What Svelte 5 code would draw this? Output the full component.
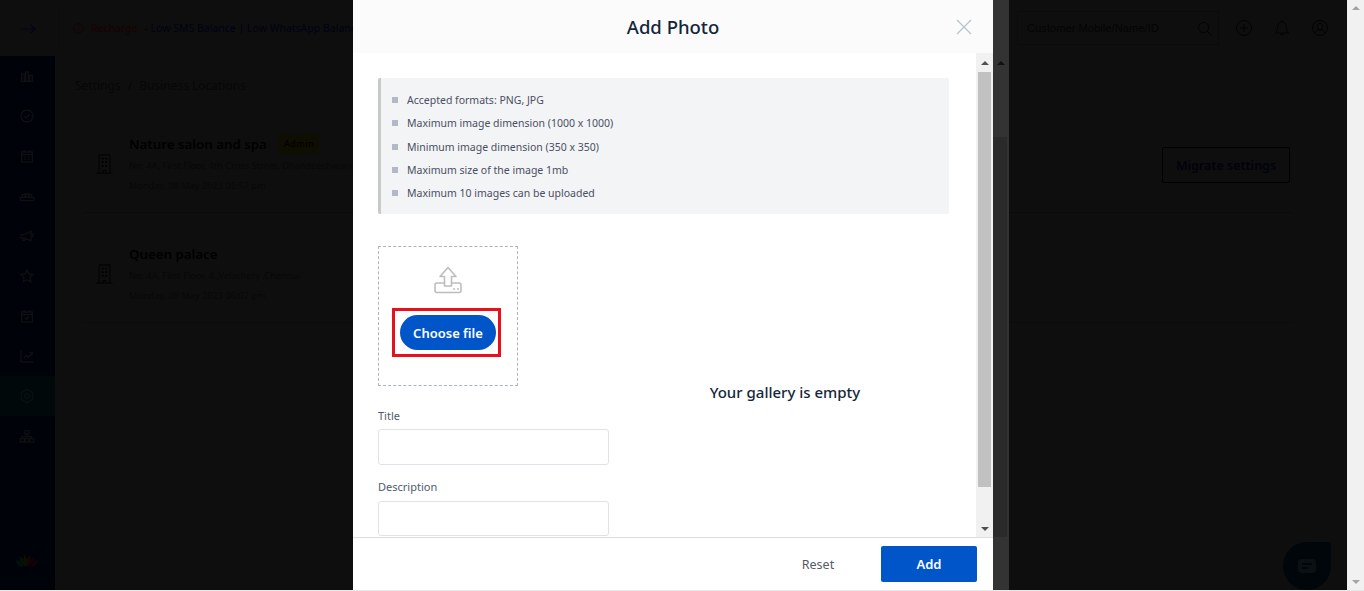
<script lang="ts">
  const rules = [
    "Accepted formats: PNG, JPG",
    "Maximum image dimension (1000 x 1000)",
    "Minimum image dimension (350 x 350)",
    "Maximum size of the image 1mb",
    "Maximum 10 images can be uploaded",
  ];

  const locations = [
    {
      name: "Nature salon and spa",
      admin: true,
      address: "No: 4A, First Floor, 4th Cross Street, Dhandeeshwaram Nagar, Velachery",
      date: "Monday, 08 May 2023 05:57 pm",
    },
    {
      name: "Queen palace",
      admin: false,
      address: "No: 4A, First Floor, 4 ,Velachery ,Chennai",
      date: "Monday, 08 May 2023 06:07 pm",
    },
  ];

  // sidebar icons, drawn on a 24 box
  const navIcons = [
    "M2 20h20M4 19V9h4v10M10 19V6h4v13M16 19v-8h4v8",
    "M12 3a9 9 0 1 0 0 18a9 9 0 1 0 0-18M8 12l3 3l5-6",
    "M4 6h16v15H4zM4 10h16M8 3v4M16 3v4M8 14h2M14 14h2M8 17h2M14 17h2",
    "M2 14h20v5H2zM5 14v-4h5v4M14 14v-4h5v4M9 9h6v5H9z",
    "M3 10v5h5l10 4V5L8 10zM6 15v4h3v-3M18 9h3v4h-3",
    "M12 3l2.800 5.900l6.200.8l-4.500 4.400l1.100 6.400L12 17.500l-5.600 3l1.100-6.400L3 9.700l6.200-.8z",
    "M4 6h16v15H4zM4 10h16M8 3v4M16 3v4M9 15l2 2l4-4",
    "M3 3v18h18M7 15l4-4l3 3l6-6M16 7h4v4",
    "M12 2l8.500 5v10L12 22l-8.500-5V7zM12 8.500a3.500 3.500 0 1 0 0 7a3.500 3.500 0 1 0 0-7",
    "M9 4h6v5H9zM12 9v4M5 16v-3h14v3M2 16h6v5H2zM9 16h6v5H9zM16 16h6v5h-6z",
  ];
</script>

<div class="screen">
  <div class="page">
    <header class="topbar">
      <div class="toggle">
        <svg width="16" height="10" viewBox="0 0 16 10" fill="none" stroke="#01041a" stroke-width="1.200">
          <path d="M0 5h15M11 1l4 4l-4 4" />
        </svg>
      </div>
      <div class="notice">
        <svg width="11" height="11" viewBox="0 0 12 12" fill="none" stroke="#180202">
          <circle cx="6" cy="6" r="5" /><path d="M6 5v4M6 3v1" />
        </svg>
        <span class="recharge">Recharge</span>
        <span class="low">- Low SMS Balance | Low WhatsApp Balance</span>
      </div>
      <div class="top-right">
        <div class="search">
          <span>Customer Mobile/Name/ID</span>
          <svg width="15" height="15" viewBox="0 0 16 16" fill="none" stroke="#030303">
            <circle cx="7" cy="7" r="5.500" /><path d="M11 11l4.500 4.500" />
          </svg>
        </div>
        <svg class="ticon" width="16" height="16" viewBox="0 0 16 16" fill="none" stroke="#030303">
          <circle cx="8" cy="8" r="7.500" /><path d="M8 4v8M4 8h8" />
        </svg>
        <svg class="ticon" width="16" height="16" viewBox="0 0 16 16" fill="none" stroke="#030303">
          <path d="M1.500 13c1.500-1 2-2.500 2-5.500S5.500 2 8 2s4.500 2.500 4.500 5.500s.5 4.500 2 5.500zM6.500 14.500h3M8 0v2" />
        </svg>
        <svg class="ticon" width="16" height="16" viewBox="0 0 16 16" fill="none" stroke="#030303">
          <circle cx="8" cy="8" r="7.500" /><circle cx="8" cy="6.500" r="3" /><path d="M3 13c1-2.500 3-3 5-3s4 .5 5 3" />
        </svg>
      </div>
    </header>

    <div class="below">
      <nav class="sidebar">
        {#each navIcons as d, i}
          <div class="nav-item" class:active={i === 8}>
            <svg width="16" height="16" viewBox="0 0 24 24" fill="none" stroke={i === 8 ? "#0a1012" : "#0e0f10"} stroke-width="2">
              <path {d} />
            </svg>
          </div>
        {/each}
        <div class="lotus">
          <svg width="24" height="13" viewBox="0 0 24 14">
            <path d="M0 7c3-1 6 1 8 7C3 14 1 11 0 7z" fill="#011009" />
            <path d="M4 3c3 0 6 4 7 11C7 12 4 8 4 3z" fill="#031206" />
            <path d="M9 1c2 2 3 4 3 7c0 2 0 4-1 6C8 10 8 5 9 1z" fill="#0e0f02" />
            <path d="M15 1c1 4 1 9-3 13c-1-4-1-9 3-13z" fill="#120802" />
            <path d="M20 3c0 5-3 9-8 11c1-6 4-10 8-11z" fill="#130202" />
            <path d="M24 7c-1 4-3 7-8 7c2-6 5-8 8-7z" fill="#10020b" />
          </svg>
        </div>
      </nav>

      <main class="content">
        <div class="crumbs"><span>Settings</span><span>/</span><span>Business Locations</span></div>
        <div class="content-row">
          <div class="locations">
            {#each locations as loc}
              <div class="location">
                <svg class="building" width="17" height="20" viewBox="0 0 18 22" fill="none" stroke="#000">
                  <path d="M3 21V1h12v20M0 21h18M7.500 21v-3h3v3" />
                  <path d="M6 5h2M10 5h2M6 9h2M10 9h2M6 13h2M10 13h2" stroke-width="2" />
                </svg>
                <div class="loc-text">
                  <div class="loc-name">
                    <span>{loc.name}</span>
                    {#if loc.admin}<span class="badge">Admin</span>{/if}
                  </div>
                  <div class="loc-line">{loc.address}</div>
                  <div class="loc-line">{loc.date}</div>
                </div>
              </div>
            {/each}
          </div>
          <button class="migrate">Migrate settings</button>
        </div>
      </main>
    </div>

    <div class="chat">
      <svg width="18" height="14" viewBox="0 0 18 14">
        <rect width="18" height="14" rx="4" fill="#0b1113" />
        <path d="M4 5h10M4 9h6" stroke="#000609" stroke-width="2" />
      </svg>
    </div>
  </div>

  <div class="page-scroll">
    <span class="arrow up"></span>
    <span class="arrow down"></span>
  </div>

  <!-- dialog over the dimmed page -->
  <div class="overlay">
    <div class="modal">
      <div class="modal-head">
        <h2>Add Photo</h2>
        <svg class="close" width="16" height="16" viewBox="0 0 16 16" fill="none" stroke="#b8c3cb" stroke-width="1.300">
          <path d="M1 1l14 14M15 1L1 15" />
        </svg>
      </div>

      <div class="modal-middle">
        <div class="modal-body">
          <ul class="rules">
            {#each rules as rule}
              <li>{rule}</li>
            {/each}
          </ul>

          <div class="columns">
            <div class="form">
              <div class="dropzone">
                <svg width="28" height="28" viewBox="0 0 28 28" fill="none" stroke="#bdbdbd" stroke-width="1.600">
                  <path d="M10.500 20V10.500H6L14 1.500l8 9h-4.500V20z" stroke-linejoin="round" />
                  <path d="M10.500 17H3a2 2 0 0 0-2 2v5.500A2 2 0 0 0 3 26.500h22a2 2 0 0 0 2-2V19a2 2 0 0 0-2-2h-7.500" />
                  <path d="M19 23h2M23 23h2" />
                </svg>
                <div class="choose-outline">
                  <button class="choose">Choose file</button>
                </div>
              </div>

              <label class="field">
                <span>Title</span>
                <input type="text" />
              </label>
              <label class="field">
                <span>Description</span>
                <input type="text" />
              </label>
            </div>

            <div class="gallery">Your gallery is empty</div>
          </div>
        </div>

        <div class="inner-scroll">
          <span class="arrow up dark"></span>
          <div class="inner-thumb"></div>
          <span class="arrow down dark"></span>
        </div>
      </div>

      <div class="modal-foot">
        <button class="reset">Reset</button>
        <button class="add">Add</button>
      </div>
    </div>

    <div class="overlay-scroll">
      <span class="arrow up black"></span>
      <div class="overlay-thumb"></div>
    </div>
  </div>
</div>

<style>
  :global(body) {
    margin: 0;
    overflow: hidden;
    background: #0e0e0e;
    font-family: "Noto Sans", "Open Sans", sans-serif;
  }

  .screen {
    position: relative;
    display: flex;
    width: 1364px;
    height: 591px;
    overflow: hidden;
    background: #0e0e0e;
    border-bottom: 1px solid #e9e9e9;
    box-sizing: border-box;
  }

  .page {
    position: relative;
    flex: 1;
    display: flex;
    flex-direction: column;
    min-width: 0;
  }

  .topbar {
    display: flex;
    align-items: center;
    height: 56px;
    flex: none;
    box-sizing: border-box;
  }

  .toggle {
    width: 57px;
    height: 38px;
    display: flex;
    align-items: center;
    justify-content: center;
    padding-top: 2px;
    border-right: 1px solid #101010;
    box-sizing: border-box;
  }

  .notice {
    display: flex;
    align-items: center;
    gap: 7px;
    margin-left: 16px;
    font-size: 10.500px;
    white-space: nowrap;
  }

  .recharge {
    color: #180202;
  }

  .low {
    color: #000212;
  }

  .top-right {
    margin-left: auto;
    display: flex;
    align-items: center;
    gap: 22px;
    padding-right: 19px;
  }

  .search {
    width: 202px;
    height: 34px;
    margin-right: -5px;
    display: flex;
    align-items: center;
    justify-content: space-between;
    padding: 0 6px 0 9px;
    border: 1px solid #0b0b0b;
    box-sizing: border-box;
    font-family: "Liberation Sans", sans-serif;
    font-size: 11.200px;
    color: #040404;
  }

  .ticon {
    flex: none;
  }

  .below {
    flex: 1;
    display: flex;
    min-height: 0;
  }

  .sidebar {
    width: 55px;
    flex: none;
    display: flex;
    flex-direction: column;
    background: #00020a;
  }

  .nav-item {
    height: 40px;
    display: flex;
    align-items: center;
    justify-content: center;
    flex: none;
    padding-right: 2px;
    box-sizing: border-box;
  }

  .nav-item.active {
    background: #01080a;
  }

  .lotus {
    margin-top: auto;
    height: 36px;
    display: flex;
    justify-content: center;
    padding-right: 2px;
  }

  .content {
    flex: 1;
    min-width: 0;
    padding: 20px 57px 0 20px;
  }

  .crumbs {
    display: flex;
    gap: 7px;
    font-size: 12px;
    color: #070707;
    line-height: 20px;
  }

  .content-row {
    display: flex;
    justify-content: space-between;
    align-items: flex-start;
    margin-top: 7px;
  }

  .locations {
    flex: 1;
    margin: 0 -131px 0 8px;
  }

  .location {
    display: flex;
    align-items: flex-start;
    gap: 16px;
    padding: 29px 13px 0;
    height: 110px;
    box-sizing: border-box;
    border-bottom: 1px solid #0b0b0b;
  }

  .building {
    flex: none;
    margin-top: 22px;
  }

  /* the dialog covers everything right of x=353, long addresses stop there */
  .loc-text {
    width: 224px;
    overflow: hidden;
    white-space: nowrap;
  }

  .loc-name {
    display: flex;
    align-items: center;
    gap: 12px;
    font-size: 13.300px;
    font-weight: 600;
    color: #000;
    min-height: 24px;
  }

  .badge {
    font-size: 9px;
    font-weight: 500;
    line-height: 14px;
    padding: 3px 5px;
    margin: 0;
    background: #0e0e02;
    border-radius: 2px;
    letter-spacing: 0.5px;
  }

  .loc-line {
    font-size: 9.200px;
    line-height: 20px;
    color: #080808;
  }

  .migrate {
    width: 128px;
    height: 36px;
    margin-top: 44px;
    background: none;
    border: 1px solid #000;
    border-radius: 2px;
    color: #00020c;
    font: 600 12.500px "Noto Sans", sans-serif;
    padding: 0;
    position: relative;
    z-index: 0;
  }

  .chat {
    position: absolute;
    right: 16px;
    bottom: 0;
    width: 48px;
    height: 48px;
    border-radius: 50% 3px 50% 50%;
    background: #000609;
    display: flex;
    align-items: center;
    justify-content: center;
  }

  .page-scroll {
    width: 17px;
    flex: none;
    display: flex;
    flex-direction: column;
    justify-content: space-between;
    align-items: center;
    padding: 6px 0;
    background: #f1f1f1;
    box-sizing: border-box;
  }

  .arrow {
    display: block;
    width: 0;
    height: 0;
    border-left: 4px solid transparent;
    border-right: 4px solid transparent;
  }

  .arrow.up {
    border-bottom: 4px solid #a3a3a3;
  }

  .arrow.down {
    border-top: 4px solid #a3a3a3;
  }

  .arrow.up.dark {
    border-bottom-color: #505050;
  }

  .arrow.down.dark {
    border-top-color: #505050;
  }

  .overlay {
    position: absolute;
    top: 0;
    left: 353px;
    height: 590px;
    display: flex;
  }

  .modal {
    width: 640px;
    height: 100%;
    display: flex;
    flex-direction: column;
    background: #fff;
  }

  .modal-head {
    position: relative;
    height: 53px;
    flex: none;
    display: flex;
    align-items: center;
    justify-content: center;
    box-sizing: border-box;
    background: #fbfbfb;
  }

  .modal-head h2 {
    margin: 0;
    font-size: 18.500px;
    font-weight: 500;
    color: #14263c;
  }

  .close {
    position: absolute;
    right: 21px;
    top: 19px;
  }

  .modal-middle {
    flex: 1;
    min-height: 0;
    display: flex;
  }

  .modal-body {
    flex: 1;
    min-width: 0;
    overflow: hidden;
    padding: 25px 27px 0 25px;
  }

  .rules {
    list-style: none;
    margin: 0;
    padding: 10.200px 0 8.800px 11px;
    background: #f3f4f6;
    border-left: 3px solid #c9c9c9;
    border-radius: 2px;
    font-size: 10.500px;
    color: #4a4f63;
  }

  .rules li {
    display: flex;
    align-items: center;
    gap: 9px;
    height: 23.400px;
  }

  .rules li::before {
    content: "";
    width: 6px;
    height: 6px;
    background: #b2b8c6;
  }

  .columns {
    display: grid;
    grid-template-columns: 231px 1fr;
    margin-top: 32px;
  }

  .dropzone {
    width: 140px;
    height: 140px;
    box-sizing: border-box;
    border: 1px dashed #a9b4bc;
    display: flex;
    flex-direction: column;
    align-items: center;
    padding-top: 19px;
  }

  .choose-outline {
    align-self: flex-start;
    margin: 14px 0 0 13px;
    padding: 4px 2px 4px 5px;
    border: 3px solid #e8101f;
  }

  .choose {
    display: block;
    width: 96px;
    height: 35px;
    padding: 1px 0 0;
    border: none;
    border-radius: 18px;
    background: #0056c9;
    color: #fff;
    font: 600 13px "Noto Sans", sans-serif;
  }

  .field {
    display: block;
    margin-top: 23px;
  }

  .field + .field {
    margin-top: 15px;
    margin-bottom: 2px;
  }

  .field span {
    display: block;
    font-size: 11px;
    line-height: 13px;
    color: #4f5b6b;
    margin-bottom: 7px;
  }

  .field + .field span {
    margin-bottom: 8px;
  }

  .field input {
    display: block;
    width: 231px;
    height: 36px;
    box-sizing: border-box;
    border: 1px solid #dfe3e8;
    border-radius: 3px;
    background: #fff;
    margin: 0;
  }

  .field + .field input {
    height: 35px;
  }

  .gallery {
    align-self: center;
    text-align: center;
    padding-left: 12px;
    font-size: 15px;
    font-weight: 500;
    color: #14263c;
  }

  .inner-scroll {
    width: 17px;
    flex: none;
    display: flex;
    flex-direction: column;
    align-items: center;
    padding: 8px 0 6px;
    box-sizing: border-box;
    background: #f1f1f1;
  }

  .inner-thumb {
    width: 13px;
    height: 415px;
    margin: 7px 0 auto;
    background: #c1c1c1;
  }

  .modal-foot {
    height: 53px;
    flex: none;
    display: flex;
    align-items: center;
    justify-content: flex-end;
    gap: 40px;
    padding-right: 16px;
    box-sizing: border-box;
    border-top: 1px solid #dedede;
  }

  .reset {
    background: none;
    border: none;
    padding: 0;
    color: #555b66;
    font: 12.500px "Noto Sans", sans-serif;
    width: 46px;
  }

  .add {
    width: 96px;
    height: 36px;
    padding: 0;
    border: none;
    border-radius: 2px;
    background: #0056c9;
    color: #fff;
    font: 600 13px "Noto Sans", sans-serif;
  }

  .overlay-scroll {
    width: 16px;
    display: flex;
    flex-direction: column;
    align-items: center;
    padding-top: 61px;
    box-sizing: border-box;
    background: #333;
    position: relative;
  }

  .arrow.up.black {
    border-bottom-color: #111;
  }

  .overlay-thumb {
    position: absolute;
    top: 137px;
    left: 0;
    width: 14px;
    height: 400px;
    background: #2a2a2a;
  }
</style>
